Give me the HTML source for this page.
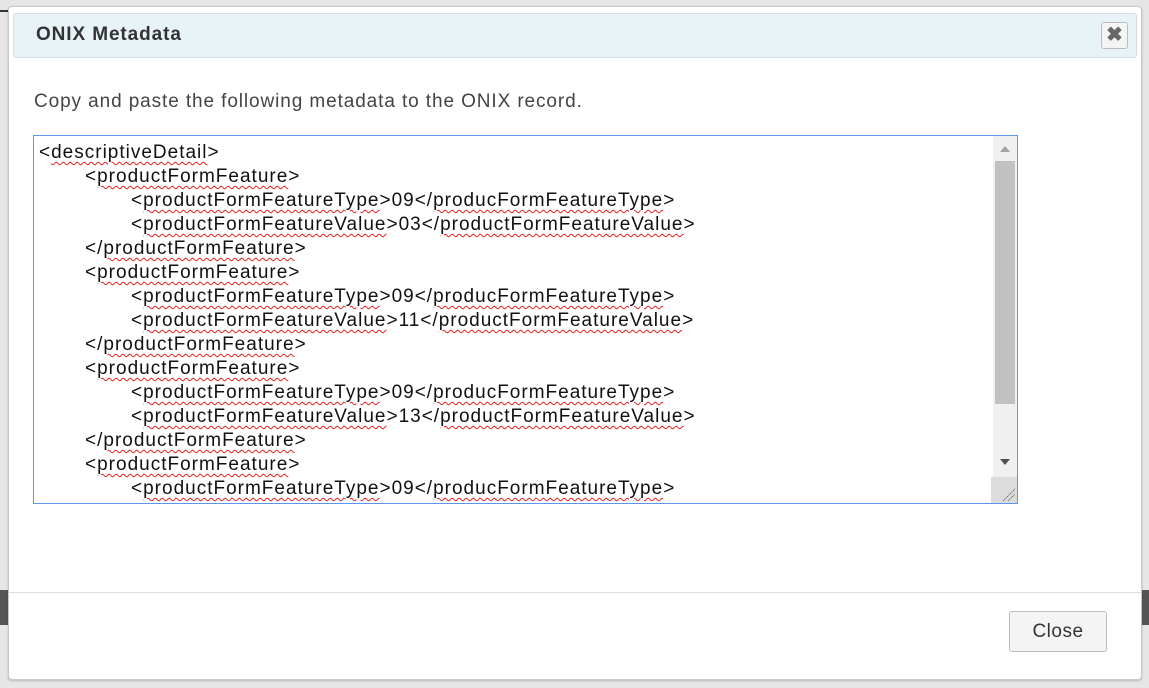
<!DOCTYPE html>
<html><head><meta charset="utf-8"><style>
body{margin:0;width:1149px;height:688px;background:#e6e6e6;position:relative;overflow:hidden;font-family:"Liberation Sans",Arial,sans-serif}
.bgl{position:absolute;left:0;background:#d9d9d9}
#dlg{position:absolute;left:8px;top:6px;width:1132px;height:672px;background:#fff;border:1px solid #c8c8c8;border-radius:4px;box-shadow:0 1px 2px rgba(0,0,0,.2)}
#hdr{position:absolute;left:4px;top:6px;width:1122px;height:43px;background:#e8f3f8;border:1px solid #d5dde2;border-radius:3px}
#hdr h1{margin:0;position:absolute;left:22px;top:10px;font-size:19px;letter-spacing:0.9px;font-weight:bold;color:#333}
#x{position:absolute;right:8px;top:8px;width:27px;height:27px;box-sizing:border-box;border:1px solid #bbb;border-radius:3px;background:#f4f4f4;color:#666;font-size:20px;font-weight:bold;text-align:center;line-height:25px}
#msg{position:absolute;left:25px;top:84px;font-size:19px;letter-spacing:0.9px;color:#444}
#ta{position:absolute;left:24px;top:128px;width:983px;height:367px;border:1px solid #5a95f0;background:#fff;overflow:hidden}
.l{position:absolute;font-size:19px;letter-spacing:1.0px;color:#111;white-space:nowrap}
.s{text-decoration:underline wavy #e02020;text-decoration-thickness:1px;text-underline-offset:3px}
#sb{position:absolute;right:0;top:0;width:24px;height:367px;background:#f0f0f0}
#th{position:absolute;left:2px;top:25px;width:20px;height:243px;background:#c1c1c1}
#rz{position:absolute;right:0;bottom:0;width:26px;height:26px;background:#dcdcdc}
#sep{position:absolute;left:0;top:585px;width:1132px;height:1px;background:#ddd}
#cl{position:absolute;left:1000px;top:604px;width:98px;height:41px;box-sizing:border-box;border:1px solid #bbb;border-radius:3px;background:#f4f4f4;font-size:19px;letter-spacing:0.5px;color:#333;text-align:center;line-height:39px}
</style></head><body>
<div class="bgl" style="top:10px;width:8px;height:2px;background:#333"></div>
<div class="bgl" style="top:590px;width:8px;height:35px;background:#555"></div>
<div class="bgl" style="left:1141px;top:590px;width:8px;height:35px;background:#555"></div>
<div id="dlg">
<div id="hdr"><h1>ONIX Metadata</h1><div id="x">✖</div></div>
<div id="msg">Copy and paste the following metadata to the ONIX record.</div>
<div id="ta">
<div class="l" style="left:5px;top:6px">&lt;<span class="s">descriptiveDetail</span>&gt;</div>
<div class="l" style="left:51px;top:30px">&lt;<span class="s">productFormFeature</span>&gt;</div>
<div class="l" style="left:97px;top:54px">&lt;<span class="s">productFormFeatureType</span>&gt;09&lt;/<span class="s">producFormFeatureType</span>&gt;</div>
<div class="l" style="left:97px;top:78px">&lt;<span class="s">productFormFeatureValue</span>&gt;03&lt;/<span class="s">productFormFeatureValue</span>&gt;</div>
<div class="l" style="left:51px;top:102px">&lt;/<span class="s">productFormFeature</span>&gt;</div>
<div class="l" style="left:51px;top:126px">&lt;<span class="s">productFormFeature</span>&gt;</div>
<div class="l" style="left:97px;top:150px">&lt;<span class="s">productFormFeatureType</span>&gt;09&lt;/<span class="s">producFormFeatureType</span>&gt;</div>
<div class="l" style="left:97px;top:174px">&lt;<span class="s">productFormFeatureValue</span>&gt;11&lt;/<span class="s">productFormFeatureValue</span>&gt;</div>
<div class="l" style="left:51px;top:198px">&lt;/<span class="s">productFormFeature</span>&gt;</div>
<div class="l" style="left:51px;top:222px">&lt;<span class="s">productFormFeature</span>&gt;</div>
<div class="l" style="left:97px;top:246px">&lt;<span class="s">productFormFeatureType</span>&gt;09&lt;/<span class="s">producFormFeatureType</span>&gt;</div>
<div class="l" style="left:97px;top:270px">&lt;<span class="s">productFormFeatureValue</span>&gt;13&lt;/<span class="s">productFormFeatureValue</span>&gt;</div>
<div class="l" style="left:51px;top:294px">&lt;/<span class="s">productFormFeature</span>&gt;</div>
<div class="l" style="left:51px;top:318px">&lt;<span class="s">productFormFeature</span>&gt;</div>
<div class="l" style="left:97px;top:342px">&lt;<span class="s">productFormFeatureType</span>&gt;09&lt;/<span class="s">producFormFeatureType</span>&gt;</div>
<div id="sb"><svg width="24" height="367" style="position:absolute;left:0;top:0"><path d="M7 16 L17 16 L12 10Z" fill="#a3a3a3"/><path d="M7 323 L17 323 L12 329Z" fill="#505050"/></svg><div id="th"></div></div>
<div id="rz"><svg width="26" height="26"><path d="M12 24 L24 12 M17 24 L24 17" stroke="#555" stroke-width="1" stroke-dasharray="1,1"/></svg></div>
</div>
<div id="sep"></div>
<div id="cl">Close</div>
</div>
</body></html>
